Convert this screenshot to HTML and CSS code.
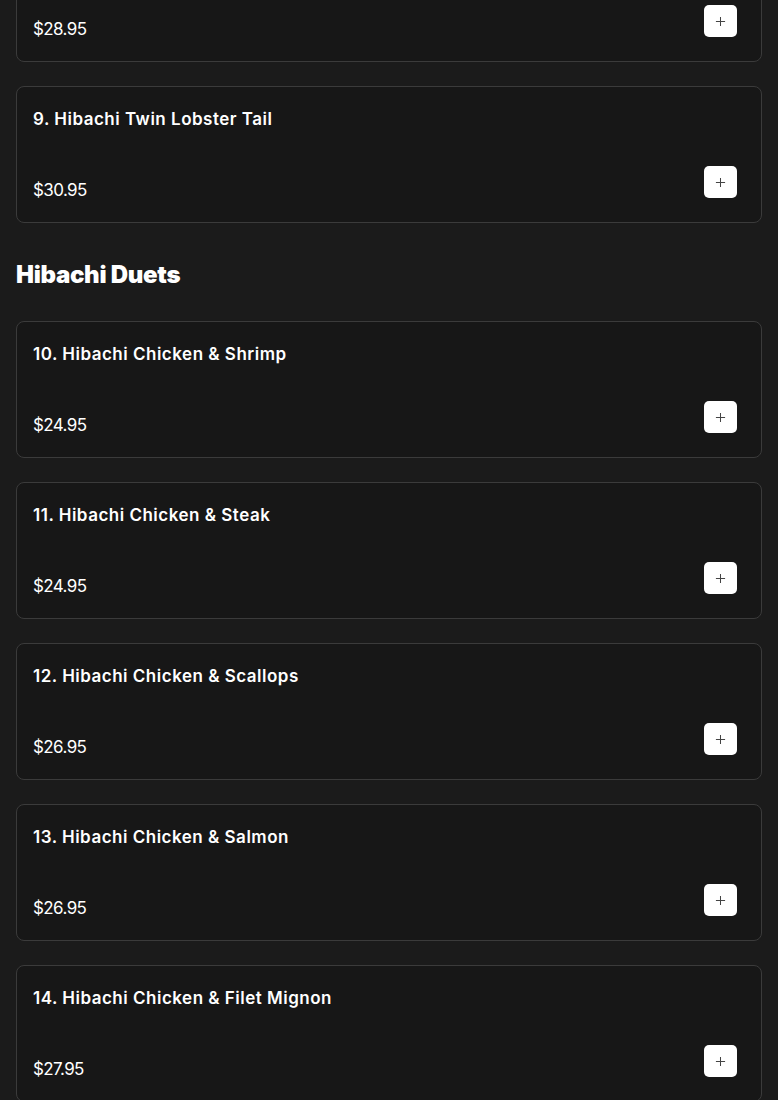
FILE: index.html
```html
<!DOCTYPE html>
<html>
<head>
<meta charset="utf-8">
<link rel="stylesheet" href="styles.css">
</head>
<body>
<main class="menu">
  <section class="group">
    <div class="card"><h3 class="name">8. Hibachi Lobster Tail</h3><div class="row"><span class="price">$28.95</span><button class="add"><svg viewBox="0 0 12 12" width="11" height="11"><path d="M6 1v10M1 6h10" stroke="#444" stroke-width="1.1"/></svg></button></div></div>
    <div class="card"><h3 class="name">9. Hibachi Twin Lobster Tail</h3><div class="row"><span class="price">$30.95</span><button class="add"><svg viewBox="0 0 12 12" width="11" height="11"><path d="M6 1v10M1 6h10" stroke="#444" stroke-width="1.1"/></svg></button></div></div>
  </section>
  <h2 class="heading">Hibachi Duets</h2>
  <section class="group">
    <div class="card"><h3 class="name">10. Hibachi Chicken &amp; Shrimp</h3><div class="row"><span class="price">$24.95</span><button class="add"><svg viewBox="0 0 12 12" width="11" height="11"><path d="M6 1v10M1 6h10" stroke="#444" stroke-width="1.1"/></svg></button></div></div>
    <div class="card"><h3 class="name">11. Hibachi Chicken &amp; Steak</h3><div class="row"><span class="price">$24.95</span><button class="add"><svg viewBox="0 0 12 12" width="11" height="11"><path d="M6 1v10M1 6h10" stroke="#444" stroke-width="1.1"/></svg></button></div></div>
    <div class="card"><h3 class="name">12. Hibachi Chicken &amp; Scallops</h3><div class="row"><span class="price">$26.95</span><button class="add"><svg viewBox="0 0 12 12" width="11" height="11"><path d="M6 1v10M1 6h10" stroke="#444" stroke-width="1.1"/></svg></button></div></div>
    <div class="card"><h3 class="name">13. Hibachi Chicken &amp; Salmon</h3><div class="row"><span class="price">$26.95</span><button class="add"><svg viewBox="0 0 12 12" width="11" height="11"><path d="M6 1v10M1 6h10" stroke="#444" stroke-width="1.1"/></svg></button></div></div>
    <div class="card"><h3 class="name">14. Hibachi Chicken &amp; Filet Mignon</h3><div class="row"><span class="price">$27.95</span><button class="add"><svg viewBox="0 0 12 12" width="11" height="11"><path d="M6 1v10M1 6h10" stroke="#444" stroke-width="1.1"/></svg></button></div></div>
  </section>
</main>
</body>
</html>
```
FILE: styles.css
```css
html, body {
  margin: 0;
  padding: 0;
  background: #1b1b1b;
  color: #fff;
  font-family: "Inter", "Noto Sans", sans-serif;
}
.menu {
  padding: 0 16px;
  margin-top: -75px;
}
.group {
  display: flex;
  flex-direction: column;
  gap: 24px;
}
.card {
  background: #171717;
  border: 1px solid #3b3b3b;
  border-radius: 8px;
  padding: 20px 24px 24px 16px;
  display: flex;
  flex-direction: column;
}
.name {
  margin: 0;
  font-size: 17px;
  line-height: 24px;
  font-weight: 600;
  letter-spacing: 0.5px;
}
.row {
  margin-top: 35px;
  height: 32px;
  display: flex;
  align-items: flex-end;
  justify-content: space-between;
}
.price {
  font-size: 17px;
  line-height: 16px;
  font-weight: 400;
  letter-spacing: -0.6px;
}
.add {
  width: 33px;
  height: 32px;
  border: none;
  border-radius: 5px;
  background: #fff;
  display: flex;
  align-items: center;
  justify-content: center;
  padding: 0;
}
.heading {
  margin: 0;
  padding: 38px 0 32px;
  font-size: 24px;
  line-height: 28px;
  font-weight: 900;
  letter-spacing: -0.3px;
}
```
